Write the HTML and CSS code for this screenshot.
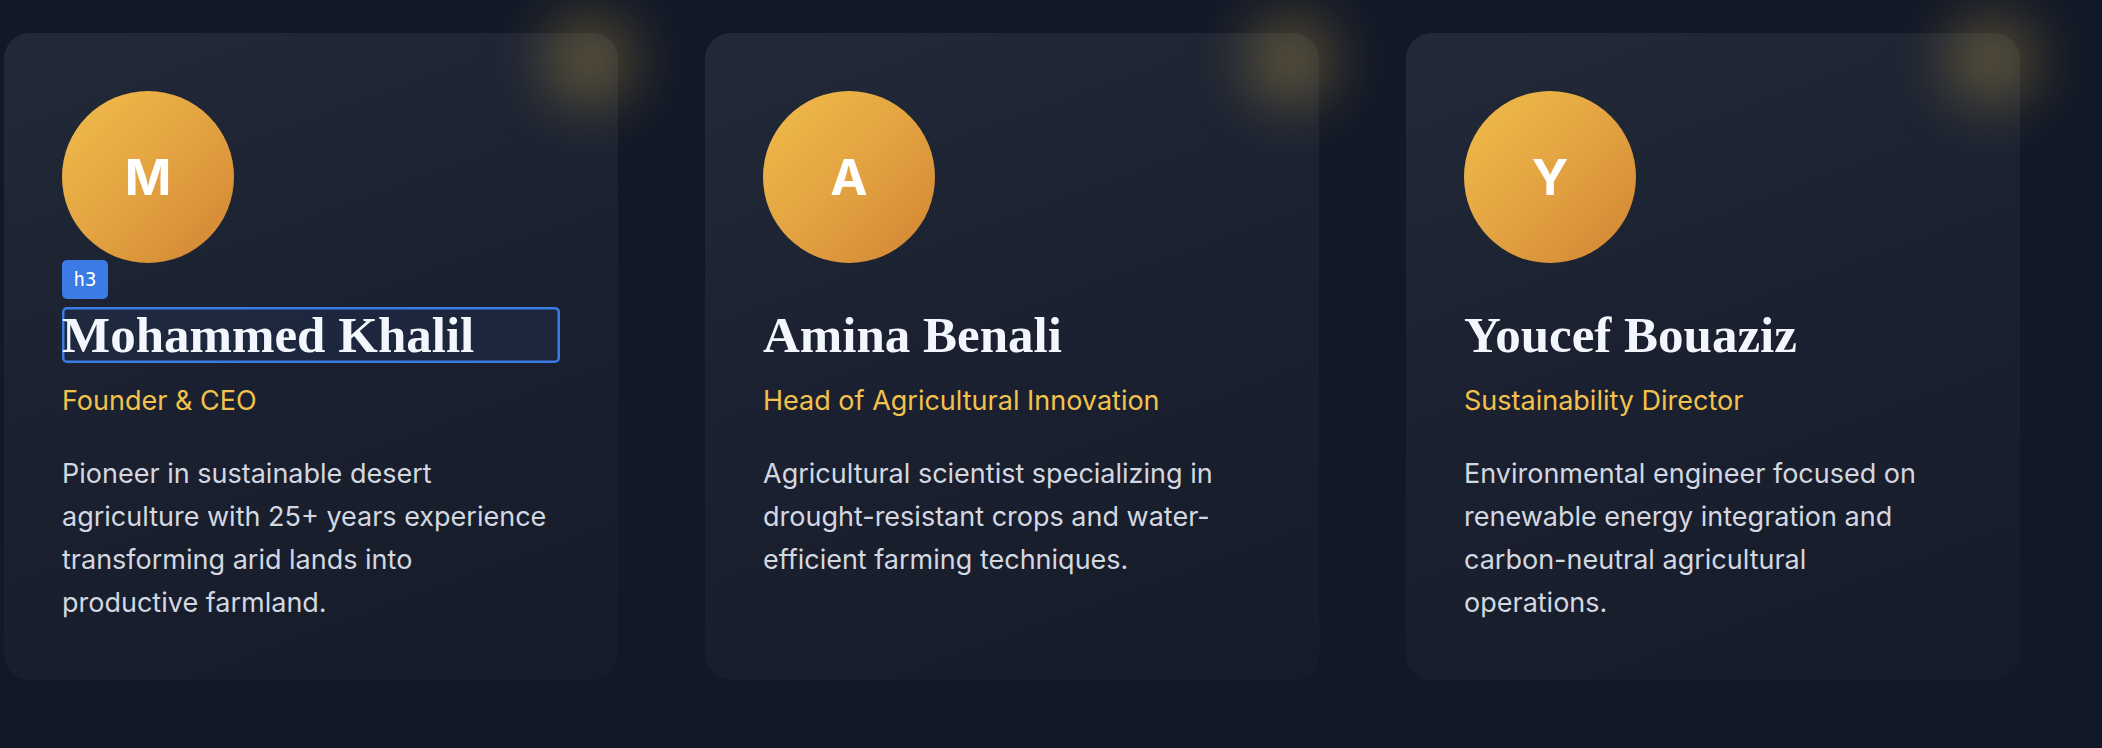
FILE: index.html
```html
<!DOCTYPE html>
<html lang="en">
<head>
<meta charset="utf-8">
<title>Team</title>
<link rel="stylesheet" href="styles.css">
</head>
<body>
<section class="team">
  <article class="card">
    <span class="glow"></span>
    <div class="avatar">M</div>
    <h3 class="name inspected"><span class="tag">h3</span>Mohammed Khalil</h3>
    <p class="role">Founder &amp; CEO</p>
    <p class="bio">Pioneer in sustainable desert agriculture with 25+ years experience transforming arid lands into productive farmland.</p>
  </article>
  <article class="card">
    <span class="glow"></span>
    <div class="avatar">A</div>
    <h3 class="name">Amina Benali</h3>
    <p class="role">Head of Agricultural Innovation</p>
    <p class="bio">Agricultural scientist specializing in drought-resistant crops and water-efficient farming techniques.</p>
  </article>
  <article class="card">
    <span class="glow"></span>
    <div class="avatar">Y</div>
    <h3 class="name">Youcef Bouaziz</h3>
    <p class="role">Sustainability Director</p>
    <p class="bio">Environmental engineer focused on renewable energy integration and carbon-neutral agricultural operations.</p>
  </article>
</section>
</body>
</html>
```

FILE: styles.css
```css
html, body {
  margin: 0;
  padding: 0;
  background: #121827;
  height: 100%;
}

body {
  font-family: Inter, "Noto Sans", sans-serif;
  overflow: hidden;
}

.team {
  display: grid;
  grid-template-columns: repeat(3, 614px);
  column-gap: 87px;
  padding: 33px 0 0 4px;
}

.card {
  position: relative;
  height: 647px;
  box-sizing: border-box;
  padding: 58px 58px 56px;
  border-radius: 26px;
  background: linear-gradient(160deg, #222937 0%, #1b2130 45%, #161b29 100%);
}

.glow {
  position: absolute;
  top: -18px;
  right: -17px;
  width: 90px;
  height: 90px;
  border-radius: 50%;
  background: rgba(234, 190, 70, 0.32);
  filter: blur(30px);
  pointer-events: none;
}

.avatar {
  width: 172px;
  height: 172px;
  border-radius: 50%;
  background: linear-gradient(135deg, #f1bd4b 0%, #e3a341 50%, #d18432 100%);
  color: #ffffff;
  font-family: Inter, "Noto Sans", sans-serif;
  font-weight: 700;
  font-size: 50px;
  display: flex;
  align-items: center;
  justify-content: center;
}

.name {
  position: relative;
  margin: 44px 0 0;
  height: 56px;
  font-family: "Liberation Serif", "Times New Roman", serif;
  font-weight: 700;
  font-size: 51px;
  line-height: 56px;
  color: #f3f6fc;
  white-space: nowrap;
}

.inspected {
  border-radius: 5px;
  background: rgba(59, 130, 246, 0.07);
  box-shadow: inset 0 0 0 2.5px #3a7be6;
}

.tag {
  position: absolute;
  left: 0;
  top: -47px;
  width: 46px;
  height: 39px;
  border-radius: 5px;
  background: #3a7be6;
  color: #ffffff;
  font-family: "DejaVu Sans Mono", "Liberation Mono", monospace;
  font-weight: 400;
  font-size: 19px;
  line-height: 39px;
  text-align: center;
}

.role {
  margin: 18px 0 0;
  font-size: 27px;
  line-height: 40.5px;
  color: #f3c24c;
}

.bio {
  margin: 30px 0 0;
  max-width: 489px;
  font-size: 27px;
  line-height: 43.3px;
  color: #d3d8e0;
}
```
